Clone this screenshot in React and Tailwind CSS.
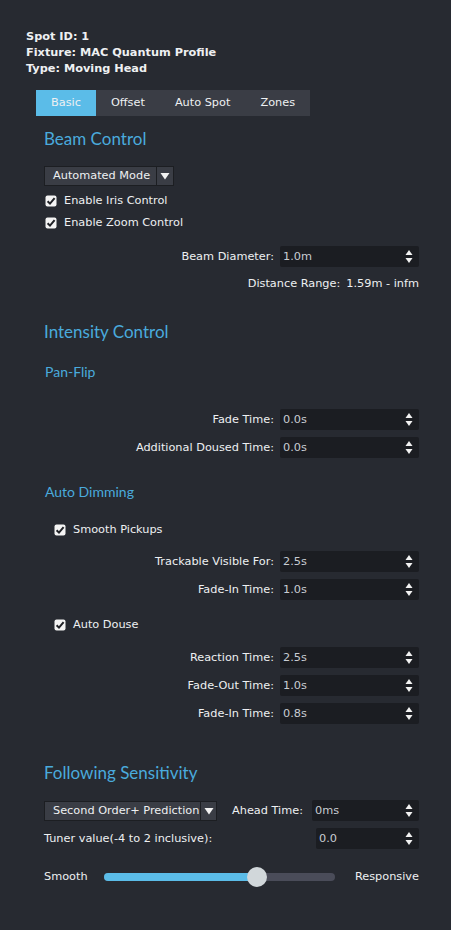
import React from "react";

const body = { fontFamily: '"DejaVu Sans", Verdana, sans-serif' };
const head = { fontFamily: 'Lato, "Open Sans", sans-serif' };

function Spin() {
  return (
    <svg width="8" height="15" viewBox="0 0 8 15" className="shrink-0">
      <path d="M4 1 L7.5 6 L0.5 6 Z" fill="#f2f2f2" />
      <path d="M0.5 9 L7.5 9 L4 14 Z" fill="#f2f2f2" />
    </svg>
  );
}

function Check() {
  return (
    <svg width="12" height="12" viewBox="0 0 12 12" className="shrink-0">
      <rect x="0.5" y="0.5" width="11" height="11" rx="2" fill="#f4f4f4" />
      <path d="M2.6 6.2 L5 8.6 L9.6 3.2" stroke="#1f2126" strokeWidth="2" fill="none" />
    </svg>
  );
}

function Arrow() {
  return (
    <svg width="10" height="8" viewBox="0 0 10 8">
      <path d="M0.5 1 L9.5 1 L5 7.5 Z" fill="#f2f2f2" />
    </svg>
  );
}

function Input({ value, w = "w-[139px]" }) {
  return (
    <div className={`${w} h-[21px] bg-[#1b1d22] rounded-[2px] flex items-center justify-between pl-[3px] pr-[6px] text-[#c8ccd2]`}>
      <span>{value}</span>
      <Spin />
    </div>
  );
}

function Row({ label, value, mt }) {
  return (
    <div className={`flex items-center justify-end gap-[6px] ${mt}`}>
      <span>{label}</span>
      <Input value={value} />
    </div>
  );
}

function CheckRow({ label, className }) {
  return (
    <div className={`flex items-center gap-[7px] ${className}`}>
      <Check />
      <span>{label}</span>
    </div>
  );
}

export default function App() {
  return (
    <div
      className="w-[451px] h-[930px] bg-[#272a31] text-[#eef0f2] text-[11.3px] leading-[16px] pt-[29px] pl-[26px] overflow-hidden"
      style={body}
    >
      <div className="font-bold leading-[16px]">
        <div>Spot ID: 1</div>
        <div>Fixture: MAC Quantum Profile</div>
        <div>Type: Moving Head</div>
      </div>

      <div className="mt-[13px] ml-[10px] flex w-[274px] h-[26px] bg-[#3a3d45] text-[#eef0f2] whitespace-nowrap">
        <div className="px-[15px] shrink-0 flex items-center bg-[#5bbce8]">Basic</div>
        <div className="px-[15px] shrink-0 flex items-center">Offset</div>
        <div className="px-[15px] shrink-0 flex items-center">Auto Spot</div>
        <div className="px-[15px] shrink-0 flex items-center">Zones</div>
      </div>

      <div className="ml-[18px] w-[375px] flex flex-col">
        <div className="mt-[12px] text-[17px] leading-[22px] text-[#4aaadd]" style={head}>
          Beam Control
        </div>

        <div className="mt-[16px] flex w-[130px] h-[20px] border border-[#1c1e22] bg-[#3a3d45]">
          <div className="flex-1 flex items-center pl-[8px]">Automated Mode</div>
          <div className="w-[17px] border-l border-[#1c1e22] flex items-center justify-center">
            <Arrow />
          </div>
        </div>

        <CheckRow label="Enable Iris Control" className="mt-[7px] ml-[1px]" />
        <CheckRow label="Enable Zoom Control" className="mt-[6px] ml-[1px]" />

        <Row label="Beam Diameter:" value="1.0m" mt="mt-[15px]" />

        <div className="mt-[9px] flex justify-end gap-[6px]">
          <span>Distance Range:</span>
          <span>1.59m - infm</span>
        </div>

        <div className="mt-[29px] text-[17px] leading-[22px] text-[#4aaadd]" style={head}>
          Intensity Control
        </div>
        <div className="mt-[20px] ml-[1px] text-[14px] leading-[18px] text-[#4aaadd]" style={head}>
          Pan-Flip
        </div>

        <Row label="Fade Time:" value="0.0s" mt="mt-[28px]" />
        <Row label="Additional Doused Time:" value="0.0s" mt="mt-[7px]" />

        <div className="mt-[25px] ml-[1px] text-[14px] leading-[18px] text-[#4aaadd]" style={head}>
          Auto Dimming
        </div>

        <CheckRow label="Smooth Pickups" className="mt-[21px] ml-[10px]" />
        <Row label="Trackable Visible For:" value="2.5s" mt="mt-[13px]" />
        <Row label="Fade-In Time:" value="1.0s" mt="mt-[7px]" />

        <CheckRow label="Auto Douse" className="mt-[17px] ml-[10px]" />
        <Row label="Reaction Time:" value="2.5s" mt="mt-[14px]" />
        <Row label="Fade-Out Time:" value="1.0s" mt="mt-[7px]" />
        <Row label="Fade-In Time:" value="0.8s" mt="mt-[7px]" />

        <div className="mt-[38px] text-[17px] leading-[22px] text-[#4aaadd]" style={head}>
          Following Sensitivity
        </div>

        <div className="mt-[16px] flex items-center">
          <div className="flex w-[173px] h-[20px] border border-[#1c1e22] bg-[#3a3d45]">
            <div className="flex-1 flex items-center pl-[8px] whitespace-nowrap">Second Order+ Prediction</div>
            <div className="w-[16px] border-l border-[#1c1e22] flex items-center justify-center">
              <Arrow />
            </div>
          </div>
          <span className="ml-[15px]">Ahead Time:</span>
          <div className="ml-auto">
            <Input value="0ms" w="w-[107px]" />
          </div>
        </div>

        <div className="mt-[7px] flex items-center justify-between">
          <span>Tuner value(-4 to 2 inclusive):</span>
          <Input value="0.0" w="w-[103px]" />
        </div>

        <div className="mt-[20px] flex items-center">
          <span>Smooth</span>
          <div className="ml-[16px] w-[231px] h-[8px] rounded-full bg-[#4a4c59] relative">
            <div className="h-full w-[153px] rounded-full bg-[#5bbce8]" />
            <div className="absolute left-[143px] top-[-6px] w-[20px] h-[20px] rounded-full bg-[#d1d7da]" />
          </div>
          <span className="ml-auto">Responsive</span>
        </div>
      </div>
    </div>
  );
}
